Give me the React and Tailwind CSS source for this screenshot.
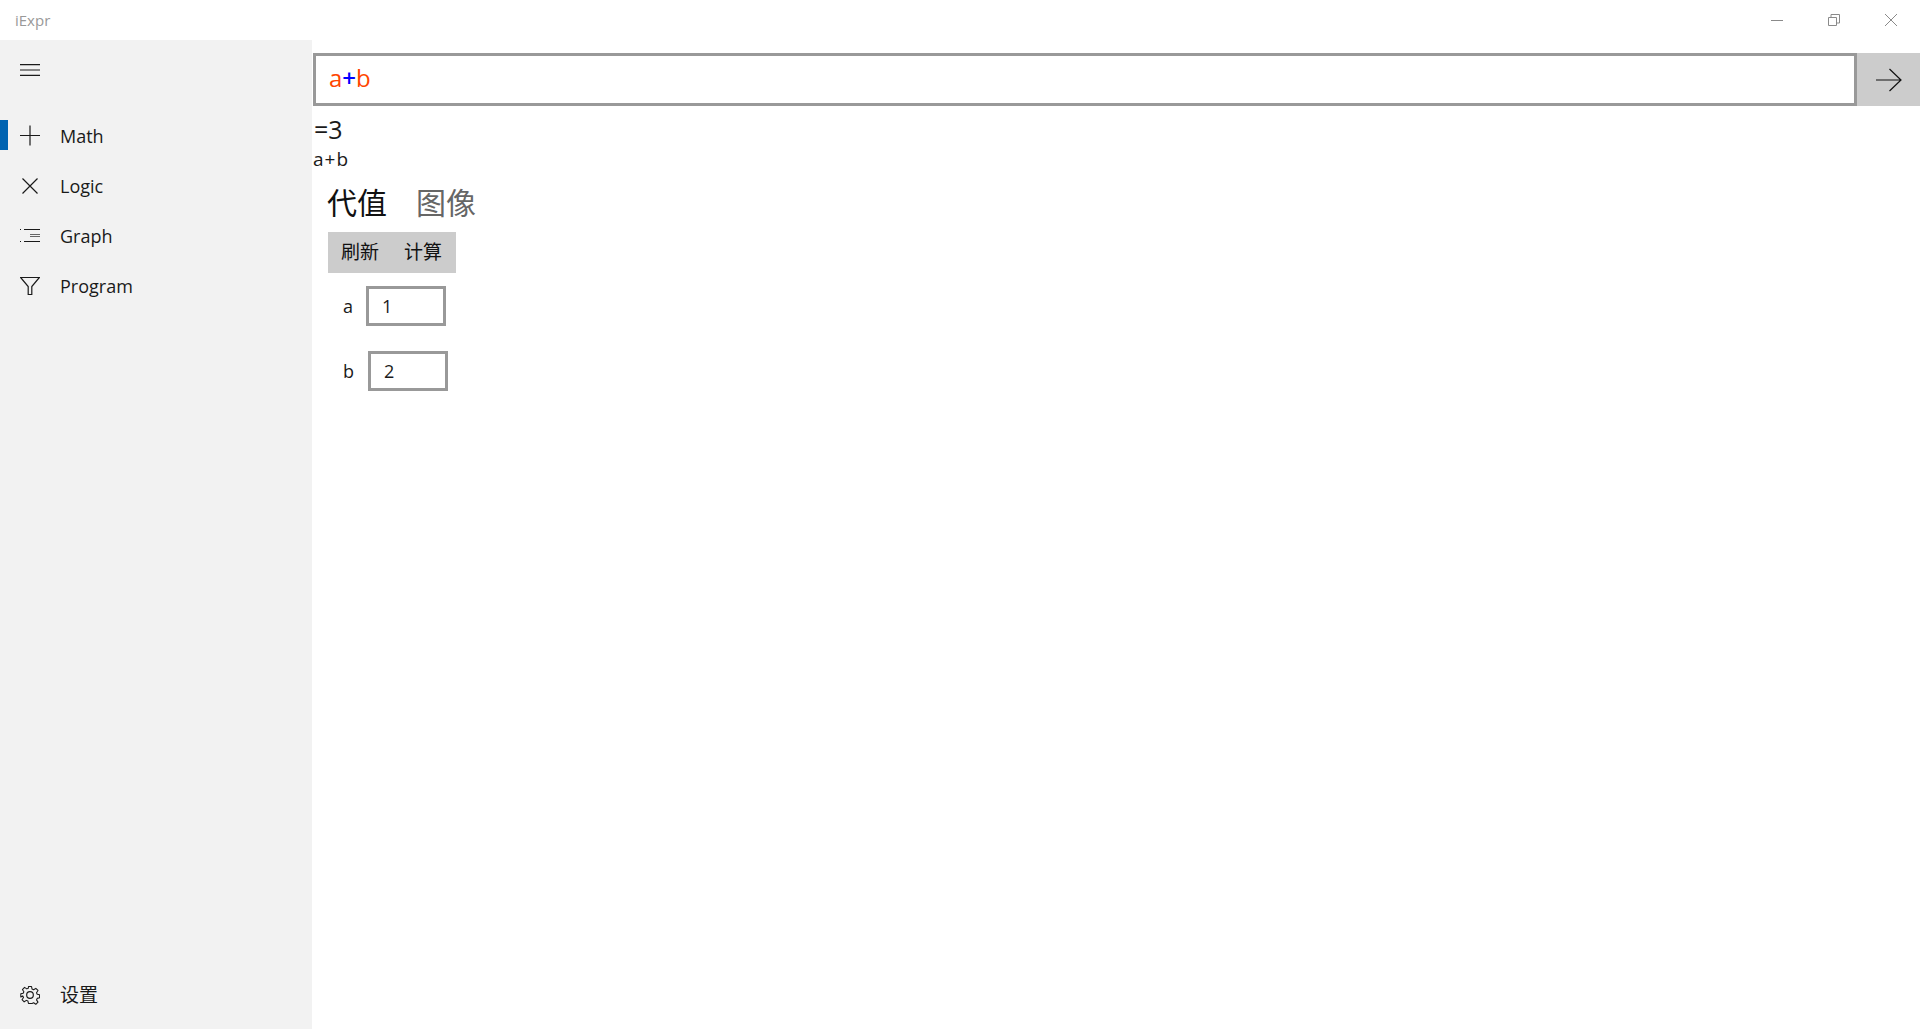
const font = "font-['Open_Sans','Noto_Sans_CJK_SC',sans-serif]";

function NavIcon({ children }) {
  return (
    <svg width="20" height="24" viewBox="0 0 20 24" fill="none" stroke="currentColor" strokeWidth="1.2" className="text-[#1a1a1a]">
      {children}
    </svg>
  );
}

const navItems = [
  {
    label: "Math",
    active: true,
    icon: <path d="M0 11.5H20M10 1.5V21.5" />,
  },
  {
    label: "Logic",
    icon: <path d="M2.5 4.5L17.5 19.5M17.5 4.5L2.5 19.5" />,
  },
  {
    label: "Graph",
    icon: (
      <>
        <path d="M0 5.5H1M4 5.5H20M0 17.5H1M4 17.5H20" />
        <path d="M10 10.5H20M10 12.5H20" strokeWidth="0.9" stroke="#555" />
      </>
    ),
  },
  {
    label: "Program",
    icon: <path d="M0.6 3.5H19.4L11.8 12.5V20.5H8.2V12.5Z" />,
  },
];

function NavRow({ item }) {
  return (
    <div className="relative flex h-[50px] items-center pl-[20px]">
      {item.active && <div className="absolute left-0 top-[9px] h-[30px] w-2 bg-[#0063b1]" />}
      <NavIcon>{item.icon}</NavIcon>
      <span className="ml-5 text-[18px] text-[#1a1a1a]">{item.label}</span>
    </div>
  );
}

function ValueRow({ name, value, className, gapClass }) {
  return (
    <div className={"flex items-center " + className}>
      <span className="text-[18px] text-[#1a1a1a]">{name}</span>
      <div className={"flex h-10 w-20 items-center border-[3px] border-[#999] pl-[13px] text-[18px] text-[#1a1a1a] " + gapClass}>
        {value}
      </div>
    </div>
  );
}

export default function App() {
  return (
    <div className={"flex h-[1029px] w-[1920px] flex-col overflow-hidden bg-white " + font}>
      {/* title bar */}
      <div className="flex h-10 items-center justify-between">
        <span className="pl-[15px] text-[15px] text-[#999]">iExpr</span>
        <div className="flex items-center pr-px text-[#8a8a8a]">
          <div className="flex w-[57px] justify-center">
            <svg width="12" height="12" viewBox="0 0 12 12" stroke="currentColor" fill="none"><path d="M0 6.5H12" /></svg>
          </div>
          <div className="flex w-[57px] justify-center">
            <svg width="12" height="12" viewBox="0 0 12 12" stroke="currentColor" fill="none"><path d="M0.5 3.5H8.5V11.5H0.5ZM3 3.5V0.5H11.5V9H8.5" /></svg>
          </div>
          <div className="flex w-[57px] justify-center">
            <svg width="12" height="12" viewBox="0 0 12 12" stroke="currentColor" fill="none"><path d="M0 0L12 12M12 0L0 12" /></svg>
          </div>
        </div>
      </div>

      <div className="flex min-h-0 flex-1">
        {/* side nav */}
        <div className="flex w-[312px] shrink-0 flex-col justify-between bg-[#f2f2f2]">
          <div>
            <div className="flex h-[60px] items-center pl-[20px]">
              <svg width="20" height="12" viewBox="0 0 20 12" fill="none" stroke="#1a1a1a" strokeWidth="1.2"><path d="M0 0.6H20M0 6H20M0 11.4H20" /></svg>
            </div>
            <div className="mt-[11px]">
              {navItems.map((item) => (
                <NavRow key={item.label} item={item} />
              ))}
            </div>
          </div>
          <div className="mb-[9px] flex h-[50px] items-center pl-[20px]">
            <svg width="20" height="20" viewBox="0 0 24 24" fill="none" stroke="#1a1a1a" strokeWidth="1.4" strokeLinejoin="round">
              <circle cx="12" cy="12" r="4" />
              <path d="M10 1h4l.7 3.3 2 .9 2.9-1.9 2.8 2.8-1.9 2.9.9 2 3.1.7v4l-3.1.7-.9 2 1.9 2.9-2.8 2.8-2.9-1.9-2 .9L14 23h-4l-.7-3.1-2-.9-2.9 1.9-2.8-2.8 1.9-2.9-.9-2L0 14.5v-4l3.1-.7.9-2-1.9-2.9 2.8-2.8 2.9 1.9 2-.9z" transform="translate(12 12) scale(.92) translate(-12 -12)" />
            </svg>
            <span className="ml-5 text-[19px] text-[#1a1a1a]">设置</span>
          </div>
        </div>

        {/* main */}
        <div className="min-w-0 flex-1 pl-px pt-[13px]">
          <div className="flex h-[53px]">
            <div className="flex flex-1 items-center border-[3px] border-[#999] pb-[3px] pl-[13px] text-[24px] leading-none">
              <span className="text-[#ff4500]">a</span>
              <span className="font-semibold text-[#0000ff]">+</span>
              <span className="text-[#ff4500]">b</span>
            </div>
            <div className="flex w-[63px] items-center justify-center bg-[#ccc]">
              <svg width="26" height="24" viewBox="0 0 26 24" fill="none" stroke="#111" strokeWidth="1.2"><path d="M0 12H25M13.5 1L25 12L13.5 23" /></svg>
            </div>
          </div>

          <div className="mt-[7px] pl-px text-[25px] leading-[33px] text-[#1a1a1a]">=3</div>
          <div className="mt-px text-[19px] leading-[25px] tracking-[1px] text-[#1a1a1a]">a+b</div>

          <div className="mt-[9px] flex pl-[14px] text-[30px] leading-[44px]">
            <span className="text-[#111]">代值</span>
            <span className="ml-[29px] text-[#666]">图像</span>
          </div>

          <div className="ml-[15px] mt-[7px] flex h-[41px] w-[128px] items-center justify-between bg-[#ccc] pl-[13px] pr-[14px] text-[19px] text-[#111]">
            <span>刷新</span>
            <span>计算</span>
          </div>

          <ValueRow name="a" value="1" className="ml-[30px] mt-[13px]" gapClass="ml-[13px]" />
          <ValueRow name="b" value="2" className="ml-[30px] mt-[25px]" gapClass="ml-[14px]" />
        </div>
      </div>
    </div>
  );
}
